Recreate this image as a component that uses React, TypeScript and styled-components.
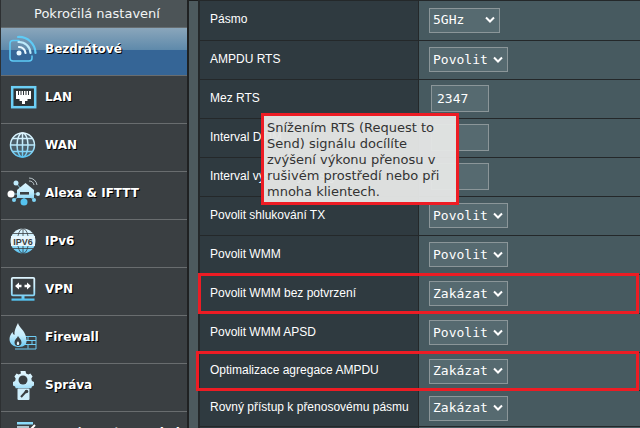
import React from "react"
import styled, { createGlobalStyle } from "styled-components"

const GlobalStyle = createGlobalStyle`
  html, body {
    margin: 0;
    padding: 0;
    background: #475a60;
  }
  * {
    box-sizing: border-box;
  }
`

const Page = styled.div`
  display: flex;
  width: 640px;
  height: 428px;
  overflow: hidden;
  position: relative;
  font-family: "Liberation Sans", Arial, sans-serif;
`

const Sidebar = styled.nav`
  width: 189px;
  flex: none;
  background: #3a3f42;
  border-left: 1px solid #2d3032;
  border-right: 2px solid #1f2122;
`

const SideTitle = styled.div`
  height: 28px;
  padding: 1px 0 0 6px;
  background: #4c5457;
  border-bottom: 1px solid #666d70;
  color: #f2f4f5;
  font: 13px/26px "DejaVu Sans", Verdana, sans-serif;
  text-align: center;
`

const NavRow = styled.div<{ $active?: boolean }>`
  display: flex;
  align-items: flex-start;
  height: 48px;
  padding-left: 5px;
  border-bottom: 1px solid #696d6f;
  background: ${({ $active }) =>
    $active
      ? "linear-gradient(180deg, #8aa6bb 0%, #5f8aab 46%, #356596 47%, #356596 100%)"
      : "#3a3f42"};
`

const NavIcon = styled.svg`
  flex: none;
  width: 36px;
  height: 36px;
  margin-top: 3px;
`

const NavLabel = styled.span`
  margin-left: 3px;
  color: #fff;
  font: bold 12px/43px "DejaVu Sans", Verdana, sans-serif;
  text-shadow: 1px 1px 0 #000;
  white-space: nowrap;
`

const Gutter = styled.div`
  width: 9px;
  flex: none;
  background: #4d5a5e;
  border-top: 1px solid #1c1e1f;
`

const Table = styled.main`
  flex: 1;
  border-left: 2px solid #24282a;
  border-top: 1px solid #24282a;
`

const Row = styled.div<{ $height: number }>`
  position: relative;
  display: flex;
  height: ${({ $height }) => $height}px;
  border-bottom: 1px solid #24282a;
`

const LabelCell = styled.div`
  width: 219px;
  flex: none;
  display: flex;
  align-items: center;
  padding: 0 0 3px 10px;
  background: #2f3a40;
  border-right: 1px solid #24282a;
  color: #fff;
  font-size: 12px;
  white-space: nowrap;
`

const ValueCell = styled.div`
  flex: 1;
  display: flex;
  align-items: center;
  padding: 0 0 1px 10px;
  background: #475a60;
`

const Select = styled.div<{ $width: number }>`
  display: flex;
  align-items: center;
  justify-content: space-between;
  width: ${({ $width }) => $width}px;
  height: 25px;
  padding: 0 4px 1px 3px;
  background: #566a70;
  border: 1px solid #8b9699;
  color: #fff;
  font: 13px "DejaVu Sans Mono", monospace;
`

const Chevron = styled.svg`
  width: 10px;
  height: 7px;
  flex: none;
`

const NumberInput = styled.input`
  width: 58px;
  height: 27px;
  margin-left: 2px;
  padding: 0 0 0 5px;
  background: #566a70;
  border: 1px solid #8b9699;
  border-radius: 0;
  outline: none;
  color: #fff;
  font: 13px "DejaVu Sans Mono", monospace;
`

const Highlight = styled.div<{ $left: number; $top: number; $bottom: number }>`
  position: absolute;
  left: ${({ $left }) => $left}px;
  right: 1px;
  top: ${({ $top }) => $top}px;
  bottom: ${({ $bottom }) => $bottom}px;
  border: 3px solid #ed1c24;
  pointer-events: none;
`

const Tooltip = styled.div`
  position: absolute;
  left: 261px;
  top: 113px;
  width: 198px;
  height: 92px;
  padding: 4px 0 0 3px;
  background: rgba(228, 230, 229, 0.96);
  border: 3px solid #ed1c24;
  color: #333;
  font: 13px/16px "DejaVu Sans", Verdana, sans-serif;
`

const Grad = ({ id }: { id: string }) => (
  <defs>
    <linearGradient id={id} gradientUnits="userSpaceOnUse" x1="0" y1="4" x2="0" y2="32">
      <stop offset="0" stopColor="#e4f7ff" />
      <stop offset="0.45" stopColor="#c4ecfc" />
      <stop offset="1" stopColor="#48bdf0" />
    </linearGradient>
  </defs>
)

const WifiIcon = () => (
  <NavIcon viewBox="0 0 36 36">
    <g fill="none" stroke="#5ecbf6" strokeLinecap="round">
      <path d="M13 9.500H7a3 3 0 0 0-3 3V27a3 3 0 0 0 3 3h16a3 3 0 0 0 3-3v-2" strokeWidth="1.500" />
      <path d="M13 16a6.500 6.500 0 0 1 6.500 6" stroke="#e8f8ff" strokeWidth="2.200" />
      <path d="M12.500 11a11.500 11.500 0 0 1 12 11" stroke="#bdeafb" strokeWidth="2.200" />
      <path d="M12 6a16.500 16.500 0 0 1 17.500 16" strokeWidth="2.200" />
    </g>
    <circle cx="13" cy="22" r="2.500" fill="#e8f8ff" />
  </NavIcon>
)

const LanIcon = () => (
  <NavIcon viewBox="0 0 36 36">
    <rect x="6.200" y="8.200" width="23" height="20" fill="#2c3336" stroke="#6ccff6" strokeWidth="2.500" />
    <path fill="#fff" d="M10 12h15v8h-3.500v2H19v3h-3v-3h-2.500v-2H10z" />
    <path stroke="#2c3336" strokeWidth="1" d="M12.500 12v4M15 12v4M17.500 12v4M20 12v4M22.500 12v4" />
  </NavIcon>
)

const WanIcon = () => (
  <NavIcon viewBox="0 0 36 36">
    <Grad id="g-wan" />
    <circle cx="16.500" cy="18" r="12" fill="#4c5f6a" />
    <g fill="none" stroke="url(#g-wan)" strokeWidth="1.500">
      <circle cx="16.500" cy="18" r="12" />
      <ellipse cx="16.500" cy="18" rx="5.500" ry="12" />
      <path d="M16.500 6v24M4.500 18h24M6.500 11.500h20M6.500 24.500h20" />
    </g>
  </NavIcon>
)

const AlexaIcon = () => (
  <NavIcon viewBox="0 0 36 36">
    <Grad id="g-alexa" />
    <g stroke="#8fdcf8" strokeWidth="0.800">
      <path d="M5 19h8M10 8l5 6M8 25l5-4M18 27v-5M28 25l-5-4M32 19h-5" />
    </g>
    <path fill="url(#g-alexa)" d="M11 15l8.500-7 8.500 7v8H11z" />
    <rect x="14" y="17" width="9" height="2.600" fill="#3a3f42" />
    <circle cx="5" cy="19" r="3.500" fill="#fff" />
    <circle cx="10" cy="8" r="2.500" fill="#bfeafb" />
    <circle cx="8" cy="25" r="2" fill="#7ed5f7" />
    <circle cx="18" cy="27" r="3.500" fill="#55c3f0" />
    <circle cx="28" cy="25" r="2" fill="#7ed5f7" />
    <circle cx="32" cy="19" r="2" fill="#bfeafb" />
    <g fill="none" stroke="#b9c4c9" strokeWidth="1">
      <path d="M23 6a5 5 0 0 1 5 4M23 3a8 8 0 0 1 8 7" />
    </g>
  </NavIcon>
)

const Ipv6Icon = () => (
  <NavIcon viewBox="0 0 36 36">
    <Grad id="g-ipv6" />
    <circle cx="17" cy="18" r="12.500" fill="url(#g-ipv6)" />
    <g fill="none" stroke="#3a3f42" strokeWidth="0.800">
      <ellipse cx="17" cy="18" rx="5.500" ry="12.500" />
      <path d="M17 5.500v25M7 10.500h20M7 25.500h20" />
    </g>
    <rect x="5" y="13" width="24" height="10" fill="#e6f6fd" />
    <text x="17" y="21.500" textAnchor="middle" fontFamily="Liberation Sans, sans-serif" fontWeight="bold" fontSize="9" fill="#3a3f42">
      IPV6
    </text>
  </NavIcon>
)

const VpnIcon = () => (
  <NavIcon viewBox="0 0 36 36">
    <Grad id="g-vpn" />
    <rect x="5.800" y="6.800" width="22.500" height="17.500" rx="1" fill="none" stroke="url(#g-vpn)" strokeWidth="1.800" />
    <path fill="#fff" d="M9 15l4-3.500v2.200h2.500v2.600H13v2.200zM25 15l-4-3.500v2.200h-2.500v2.600H21v2.200z" />
    <rect x="15.500" y="25" width="3" height="3" fill="#6fcdf4" />
    <rect x="5.500" y="27.500" width="23" height="2.200" fill="#55c3f0" />
  </NavIcon>
)

const FirewallIcon = () => (
  <NavIcon viewBox="0 0 36 36">
    <Grad id="g-fire" />
    <g fill="none" stroke="#6fcdf4" strokeWidth="1">
      <path d="M13 17.500h17v12.500H9M22 17.500v4M15 21.500h15M26 21.500v4M18 25.500h12M22 25.500v4" />
    </g>
    <path
      fill="url(#g-fire)"
      d="M12 4c1 4 5 6 7 11 .8 2 1.200 3 1.500 6 .5 4-2 7-7.500 7-5 0-9.500-2.500-9.500-8 0-3 1.500-5 3-7 .3 1.500 .8 2.500 2 3-.5-4 1.500-8 3.500-12z"
    />
    <path fill="#3a3f42" d="M12 17c1 2 3.500 3.500 3.500 6.500 0 2-1.500 3.500-3.500 3.500s-3.500-1.500-3.500-3.500c0-3 2.500-4 3.500-6.500z" />
    <path fill="#e6f6fd" d="M12 22c.5 1 1.200 1.500 1.200 2.500S12.700 26 12 26s-1.200-.5-1.200-1.500.7-1.500 1.200-2.500z" />
  </NavIcon>
)

const AdminIcon = () => (
  <NavIcon viewBox="0 0 36 36">
    <Grad id="g-admin" />
    <path
      fill="url(#g-admin)"
      d="M14.500 4h5l.6 2.600 2.300 1 2-1.200 2.200 3-1.300 2.100.6 2.400 2.100 1v3.600l-2.100 1-.6 1.800H9.700l-.6-1.800-2.100-1v-3.600l2.100-1 .6-2.400-1.300-2.100 2.200-3 2 1.200 2.300-1z"
    />
    <circle cx="17" cy="13" r="4.500" fill="#3a3f42" />
    <rect x="11.500" y="21.500" width="12" height="11.500" rx="1" fill="#cfeefb" />
    <path d="M20.500 24l-5.500 6" stroke="#3a3f42" strokeWidth="2" fill="none" />
    <circle cx="20.500" cy="24.500" r="1.800" fill="#3a3f42" />
  </NavIcon>
)

const LogIcon = () => (
  <NavIcon viewBox="0 0 36 36">
    <rect x="11" y="7" width="16" height="2.500" fill="#8adcfb" />
    <path d="M11 12h12M11 16h12" stroke="#d6f1fc" strokeWidth="1.500" />
    <path d="M25 14l4-4" stroke="#fff" strokeWidth="2" />
  </NavIcon>
)

const navItems: { label: string; icon: React.ReactNode; active?: boolean }[] = [
  { label: "Bezdrátové", icon: <WifiIcon />, active: true },
  { label: "LAN", icon: <LanIcon /> },
  { label: "WAN", icon: <WanIcon /> },
  { label: "Alexa & IFTTT", icon: <AlexaIcon /> },
  { label: "IPv6", icon: <Ipv6Icon /> },
  { label: "VPN", icon: <VpnIcon /> },
  { label: "Firewall", icon: <FirewallIcon /> },
  { label: "Správa", icon: <AdminIcon /> },
  { label: "Systémový protokol", icon: <LogIcon /> },
]

type Setting = {
  label: string
  height: number
  value?: string
  input?: string
  width?: number
  mark?: { left: number; top: number; bottom: number }
}

const settings: Setting[] = [
  { label: "Pásmo", height: 40, value: "5GHz", width: 71 },
  { label: "AMPDU RTS", height: 39, value: "Povolit" },
  { label: "Mez RTS", height: 39, input: "2347" },
  { label: "Interval DTIM", height: 39, input: "" },
  { label: "Interval výstražných signálů", height: 39, input: "" },
  { label: "Povolit shlukování TX", height: 39, value: "Povolit" },
  { label: "Povolit WMM", height: 39, value: "Povolit" },
  {
    label: "Povolit WMM bez potvrzení",
    height: 39,
    value: "Zakázat",
    mark: { left: -2, top: -2, bottom: -1 },
  },
  { label: "Povolit WMM APSD", height: 39, value: "Povolit" },
  {
    label: "Optimalizace agregace AMPDU",
    height: 38,
    value: "Zakázat",
    mark: { left: -4, top: -2, bottom: -1 },
  },
  { label: "Rovný přístup k přenosovému pásmu", height: 36, value: "Zakázat" },
  { label: "", height: 30 },
]

const App = () => (
  <Page>
    <GlobalStyle />
    <Sidebar>
      <SideTitle>Pokročilá nastavení</SideTitle>
      {navItems.map((item) => (
        <NavRow key={item.label} $active={item.active}>
          {item.icon}
          <NavLabel>{item.label}</NavLabel>
        </NavRow>
      ))}
    </Sidebar>
    <Gutter />
    <Table>
      {settings.map((s) => (
        <Row key={s.label} $height={s.height}>
          <LabelCell>{s.label}</LabelCell>
          <ValueCell>
            {s.value && (
              <Select $width={s.width ?? 79}>
                {s.value}
                <Chevron viewBox="0 0 10 7">
                  <path d="M1 1.500l4 4 4-4" fill="none" stroke="#fff" strokeWidth="2" />
                </Chevron>
              </Select>
            )}
            {s.input !== undefined && <NumberInput readOnly value={s.input} />}
          </ValueCell>
          {s.mark && <Highlight $left={s.mark.left} $top={s.mark.top} $bottom={s.mark.bottom} />}
        </Row>
      ))}
    </Table>
    <Tooltip>
      Snížením RTS (Request to Send) signálu docílíte zvýšení výkonu přenosu v rušivém prostředí nebo při mnoha klientech.
    </Tooltip>
  </Page>
)

export default App
